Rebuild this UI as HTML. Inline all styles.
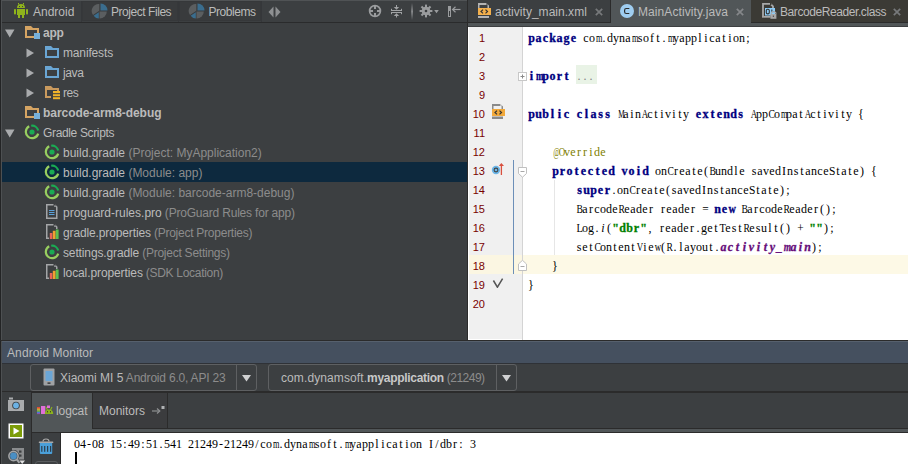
<!DOCTYPE html>
<html><head><meta charset="utf-8"><style>
html,body{margin:0;padding:0;background:#3c3f41;}
#r{position:relative;width:908px;height:464px;overflow:hidden;background:#3c3f41;font-family:"Liberation Sans",sans-serif;font-size:12px;color:#bbbbbb;}
#r div, #r svg{position:absolute;}
.t{white-space:pre;}
.g{color:#8c8c8c;}
.cd{font-family:"Liberation Serif",serif;font-size:12px;line-height:19px;white-space:pre;color:#000;}
.cd i{display:inline-block;width:6px;height:19px;font-style:normal;text-align:center;vertical-align:top;}
.cd .k i,.cd .s i,.cd .f i{width:7px;font-weight:bold;-webkit-text-stroke:0.3px;}
.k{color:#000080}.s{color:#008000}.f{color:#660e7a}.f i,.it i{font-style:italic}.an{color:#808000}.gr{color:#808080}
.ln{font-family:"Liberation Sans",sans-serif;font-size:11px;color:#780000;text-align:right;width:30px;line-height:19px;}
</style></head><body><div id="r">
<div style="left:0px;top:0px;width:1px;height:464px;background:#232425;"></div>
<div style="left:1px;top:0px;width:1px;height:464px;background:#4d5052;"></div>
<div style="left:2px;top:0px;width:465px;height:1px;background:#505355;"></div>
<div style="left:2px;top:1px;width:465px;height:21px;background:#3c3f41;"></div>
<div style="left:81px;top:1px;width:1px;height:21px;background:#35373a;"></div>
<div style="left:82px;top:1px;width:96px;height:20px;background:#393b3d;border:1px solid #36383a;box-sizing:border-box;"></div>
<div style="left:178px;top:1px;width:1px;height:21px;background:#35373a;"></div>
<div style="left:179px;top:1px;width:82px;height:20px;background:#393b3d;border:1px solid #36383a;box-sizing:border-box;"></div>
<div style="left:261px;top:1px;width:1px;height:21px;background:#35373a;"></div>
<div style="left:2px;top:22px;width:465px;height:1px;background:#2a2b2c;"></div>
<div style="left:467px;top:0px;width:1px;height:340px;background:#2b2b2b;"></div>
<svg style="left:13px;top:2px" width="17" height="18" viewBox="0 0 17 18">
<g fill="#8fb31c">
<path d="M4 6 Q4 2 8 2 Q12 2 12 6 Z"/>
<rect x="5" y="1" width="1" height="1.5"/><rect x="10" y="1" width="1" height="1.5"/>
<rect x="4" y="7" width="8" height="6"/>
<rect x="1" y="7" width="2" height="5.5" rx="0.8"/><rect x="13" y="7" width="2" height="5.5" rx="0.8"/>
<rect x="5" y="12.5" width="2" height="3.5"/><rect x="9" y="12.5" width="2" height="3.5"/>
</g>
<rect x="6" y="4" width="1" height="1" fill="#3c3f41"/><rect x="9" y="4" width="1" height="1" fill="#3c3f41"/>
</svg>
<div class="t" style="left:33px;top:2px;line-height:20px;">Android</div>
<svg style="left:91px;top:2px" width="18" height="18" viewBox="0 0 18 18">
<path d="M9.5 8.5 L9.5 1.5 A7 7 0 0 1 16.5 8.5 Z" fill="#3a6d8e"/>
<path d="M8.5 9.5 L15.8 9.5 A7 7 0 0 1 8.5 16.5 Z" fill="#5b5e60"/>
<path d="M7.8 10.3 L7.8 16.6 A7 7 0 0 1 2.6 13.8 Z" fill="#3a6d8e"/>
<path d="M8.3 8.7 L2.0 13.0 A7 7 0 0 1 8.3 2.0 Z" fill="#5b5e60"/>
</svg>
<div class="t" style="left:111px;top:2px;line-height:20px;letter-spacing:-0.45px">Project Files</div>
<svg style="left:188px;top:2px" width="18" height="18" viewBox="0 0 18 18">
<path d="M9.5 8.5 L9.5 1.5 A7 7 0 0 1 16.5 8.5 Z" fill="#3a6d8e"/>
<path d="M8.5 9.5 L15.8 9.5 A7 7 0 0 1 8.5 16.5 Z" fill="#5b5e60"/>
<path d="M7.8 10.3 L7.8 16.6 A7 7 0 0 1 2.6 13.8 Z" fill="#3a6d8e"/>
<path d="M8.3 8.7 L2.0 13.0 A7 7 0 0 1 8.3 2.0 Z" fill="#5b5e60"/>
</svg>
<div class="t" style="left:208.5px;top:2px;line-height:20px;letter-spacing:-0.45px">Problems</div>
<svg style="left:268px;top:6px" width="14" height="12" viewBox="0 0 14 12">
<path d="M5.5 0.5 L0.5 6 L5.5 11.5 Z" fill="#8e9092"/><path d="M7.5 0.5 L12.5 6 L7.5 11.5 Z" fill="#8e9092"/>
</svg>
<svg style="left:368px;top:4px" width="14" height="14" viewBox="0 0 14 14">
<circle cx="7" cy="7" r="5.4" fill="none" stroke="#9a9c9e" stroke-width="1.7"/>
<g fill="#9a9c9e"><rect x="6" y="1.5" width="2" height="3.5"/><rect x="6" y="9" width="2" height="3.5"/><rect x="1.5" y="6" width="3.5" height="2"/><rect x="9" y="6" width="3.5" height="2"/></g>
</svg>
<svg style="left:390px;top:4px" width="13" height="14" viewBox="0 0 13 14">
<g fill="#a0a2a4">
<rect x="1" y="6" width="11" height="1"/><rect x="1" y="4.8" width="1" height="2.2"/><rect x="11" y="4.8" width="1" height="2.2"/>
<rect x="1" y="8" width="11" height="1"/><rect x="1" y="8" width="1" height="2.2"/><rect x="11" y="8" width="1" height="2.2"/>
<rect x="6" y="1" width="1" height="2.5"/><path d="M3.8 3 H9.2 L6.5 5.8 Z"/>
<rect x="6" y="11" width="1" height="2.5"/><path d="M3.8 12 H9.2 L6.5 9.2 Z"/>
</g>
</svg>
<svg style="left:411px;top:3px" width="2" height="17" viewBox="0 0 2 17"><defs><linearGradient id="sg" x1="0" y1="0" x2="0" y2="1"><stop offset="0" stop-color="#3c3f41"/><stop offset="0.5" stop-color="#9a9c9e"/><stop offset="1" stop-color="#3c3f41"/></linearGradient></defs><rect x="0.3" y="0" width="1.5" height="17" fill="url(#sg)"/></svg>
<svg style="left:419px;top:4px" width="22" height="14" viewBox="0 0 22 14">
<g fill="#9a9c9e">
<circle cx="7" cy="7" r="4.3"/>
<rect x="6" y="0.6" width="2" height="12.8"/>
<rect x="0.6" y="6" width="12.8" height="2"/>
<rect x="6" y="0.6" width="2" height="12.8" transform="rotate(45 7 7)"/>
<rect x="6" y="0.6" width="2" height="12.8" transform="rotate(-45 7 7)"/>
<path d="M15.2 6 H19.8 L17.5 9.2 Z"/>
</g>
<circle cx="7" cy="7" r="1.3" fill="#3a3d3f"/>
</svg>
<svg style="left:447px;top:5px" width="14" height="13" viewBox="0 0 14 13">
<rect x="1" y="1" width="3" height="11" fill="#9a9c9e"/>
<rect x="2" y="6" width="1" height="5" fill="#3a3d3f"/>
<path d="M6 4.5 H13.5" stroke="#9a9c9e" stroke-width="1.2"/>
<path d="M8.5 1.8 L5.6 4.5 L8.5 7.2" fill="none" stroke="#9a9c9e" stroke-width="1.2"/>
</svg>
<div style="left:2px;top:23px;width:465px;height:317px;background:#3c3f41;"></div>
<div style="left:2px;top:162px;width:465px;height:20px;background:#0d293e;"></div>
<svg style="left:5px;top:29px" width="10" height="9" viewBox="0 0 10 9"><path d="M0 0.5 H9.5 L4.75 8.5 Z" fill="#a9abad"/></svg>
<svg style="left:25px;top:26px" width="16" height="14" viewBox="0 0 16 14">
<path d="M0 0 H6 L8 2 H14 V8 H12 V4 H2 V10 H9 V12 H0 Z" fill="#d5a463"/>
<rect x="9" y="7" width="6" height="6" fill="#76b0da"/>
</svg>
<div class="t" style="left:43px;top:23px;line-height:20px;font-weight:bold;letter-spacing:-0.2px">app</div>
<svg style="left:26px;top:48px" width="9" height="10" viewBox="0 0 9 10"><path d="M0.5 0.5 L8 5 L0.5 9.5 Z" fill="#a9abad"/></svg>
<svg style="left:45px;top:46px" width="15" height="13" viewBox="0 0 15 13">
<path d="M0 0 H6 L8 2 H14 V12 H0 Z M2 4 V10 H12 V4 Z" fill="#6aa6d4" fill-rule="evenodd"/>
</svg>
<div class="t" style="left:63px;top:43px;line-height:20px;letter-spacing:-0.15px">manifests</div>
<svg style="left:26px;top:68px" width="9" height="10" viewBox="0 0 9 10"><path d="M0.5 0.5 L8 5 L0.5 9.5 Z" fill="#a9abad"/></svg>
<svg style="left:45px;top:66px" width="15" height="13" viewBox="0 0 15 13">
<path d="M0 0 H6 L8 2 H14 V12 H0 Z M2 4 V10 H12 V4 Z" fill="#6aa6d4" fill-rule="evenodd"/>
</svg>
<div class="t" style="left:63px;top:63px;line-height:20px;letter-spacing:-0.4px">java</div>
<svg style="left:26px;top:88px" width="9" height="10" viewBox="0 0 9 10"><path d="M0.5 0.5 L8 5 L0.5 9.5 Z" fill="#a9abad"/></svg>
<svg style="left:45px;top:86px" width="16" height="14" viewBox="0 0 16 14">
<path d="M0 0 H6 L8 2 H14 V5 H12 V4 H2 V10 H6 V12 H0 Z" fill="#c99a5e"/>
<g fill="#f0b428"><rect x="8" y="5" width="7" height="2.2"/><rect x="8" y="8.2" width="7" height="2"/><rect x="8" y="11.2" width="7" height="2"/></g>
</svg>
<div class="t" style="left:63px;top:83px;line-height:20px;letter-spacing:-0.5px">res</div>
<svg style="left:25px;top:106px" width="16" height="14" viewBox="0 0 16 14">
<path d="M0 0 H6 L8 2 H14 V8 H12 V4 H2 V10 H9 V12 H0 Z" fill="#d5a463"/>
<rect x="9" y="7" width="6" height="6" fill="#76b0da"/>
</svg>
<div class="t" style="left:43px;top:103px;line-height:20px;font-weight:bold;letter-spacing:-0.05px">barcode-arm8-debug</div>
<svg style="left:5px;top:129px" width="10" height="9" viewBox="0 0 10 9"><path d="M0 0.5 H9.5 L4.75 8.5 Z" fill="#a9abad"/></svg>
<svg style="left:24px;top:124px" width="16" height="16" viewBox="0 0 16 16">
<path d="M5.2 2.3 A6.3 6.3 0 1 0 14.2 9.6" fill="none" stroke="#98cf60" stroke-width="2.2"/>
<path d="M7.2 1.75 A6.3 6.3 0 0 1 14.2 6.6" fill="none" stroke="#1aab53" stroke-width="2.2"/>
<circle cx="8" cy="8" r="2.6" fill="#1aab53"/>
</svg>
<div class="t" style="left:43px;top:123px;line-height:20px;letter-spacing:-0.35px">Gradle Scripts</div>
<svg style="left:44px;top:144px" width="16" height="16" viewBox="0 0 16 16">
<path d="M5.2 2.3 A6.3 6.3 0 1 0 14.2 9.6" fill="none" stroke="#98cf60" stroke-width="2.2"/>
<path d="M7.2 1.75 A6.3 6.3 0 0 1 14.2 6.6" fill="none" stroke="#1aab53" stroke-width="2.2"/>
<circle cx="8" cy="8" r="2.6" fill="#1aab53"/>
</svg>
<div class="t" style="left:63px;top:143px;line-height:20px;">build.gradle<span class="g"> (Project: MyApplication2)</span></div>
<svg style="left:44px;top:164px" width="16" height="16" viewBox="0 0 16 16">
<path d="M5.2 2.3 A6.3 6.3 0 1 0 14.2 9.6" fill="none" stroke="#98cf60" stroke-width="2.2"/>
<path d="M7.2 1.75 A6.3 6.3 0 0 1 14.2 6.6" fill="none" stroke="#1aab53" stroke-width="2.2"/>
<circle cx="8" cy="8" r="2.6" fill="#1aab53"/>
</svg>
<div class="t" style="left:63px;top:163px;line-height:20px;">build.gradle<span class="g"> (Module: app)</span></div>
<svg style="left:44px;top:184px" width="16" height="16" viewBox="0 0 16 16">
<path d="M5.2 2.3 A6.3 6.3 0 1 0 14.2 9.6" fill="none" stroke="#98cf60" stroke-width="2.2"/>
<path d="M7.2 1.75 A6.3 6.3 0 0 1 14.2 6.6" fill="none" stroke="#1aab53" stroke-width="2.2"/>
<circle cx="8" cy="8" r="2.6" fill="#1aab53"/>
</svg>
<div class="t" style="left:63px;top:183px;line-height:20px;">build.gradle<span class="g"> (Module: barcode-arm8-debug)</span></div>
<svg style="left:44px;top:203px" width="15" height="17" viewBox="0 0 15 17">
<path d="M2.75 1.75 H10.5 L12.75 4 V15.25 H2.75 Z" fill="none" stroke="#a3a5a7" stroke-width="1.5"/>
<rect x="9.5" y="1" width="2" height="2" fill="#3c3f41"/><rect x="10" y="2.5" width="1.2" height="1.2" fill="#a3a5a7"/>
<g fill="#5aa0d8"><rect x="5" y="7" width="5.5" height="1"/><rect x="5" y="9" width="5.5" height="1"/><rect x="5" y="11" width="5.5" height="1"/></g>
</svg>
<div class="t" style="left:63px;top:203px;line-height:20px;">proguard-rules.pro<span class="g" style="letter-spacing:-0.2px"> (ProGuard Rules for app)</span></div>
<svg style="left:44px;top:223px" width="15" height="17" viewBox="0 0 15 17">
<path d="M2.75 16 V1.75 H10.5 L12.75 4 V6" fill="none" stroke="#a3a5a7" stroke-width="1.5"/>
<path d="M2 15.25 H5" stroke="#a3a5a7" stroke-width="1.5"/>
<rect x="9.5" y="1" width="2" height="2" fill="#3c3f41"/><rect x="10" y="2.5" width="1.2" height="1.2" fill="#a3a5a7"/>
<rect x="5.8" y="10" width="2.6" height="6" fill="#e8645a"/>
<rect x="8.8" y="7.8" width="2.8" height="8.2" fill="#f0a030"/>
<rect x="11.8" y="6.5" width="2.8" height="9.5" fill="#5cc050"/>
</svg>
<div class="t" style="left:63px;top:223px;line-height:20px;"><span style="letter-spacing:-0.13px">gradle.properties</span><span class="g" style="letter-spacing:-0.25px"> (Project Properties)</span></div>
<svg style="left:44px;top:244px" width="16" height="16" viewBox="0 0 16 16">
<path d="M5.2 2.3 A6.3 6.3 0 1 0 14.2 9.6" fill="none" stroke="#98cf60" stroke-width="2.2"/>
<path d="M7.2 1.75 A6.3 6.3 0 0 1 14.2 6.6" fill="none" stroke="#1aab53" stroke-width="2.2"/>
<circle cx="8" cy="8" r="2.6" fill="#1aab53"/>
</svg>
<div class="t" style="left:63px;top:243px;line-height:20px;"><span style="letter-spacing:-0.13px">settings.gradle</span><span class="g" style="letter-spacing:-0.25px"> (Project Settings)</span></div>
<svg style="left:44px;top:263px" width="15" height="17" viewBox="0 0 15 17">
<path d="M2.75 16 V1.75 H10.5 L12.75 4 V6" fill="none" stroke="#a3a5a7" stroke-width="1.5"/>
<path d="M2 15.25 H5" stroke="#a3a5a7" stroke-width="1.5"/>
<rect x="9.5" y="1" width="2" height="2" fill="#3c3f41"/><rect x="10" y="2.5" width="1.2" height="1.2" fill="#a3a5a7"/>
<rect x="5.8" y="10" width="2.6" height="6" fill="#e8645a"/>
<rect x="8.8" y="7.8" width="2.8" height="8.2" fill="#f0a030"/>
<rect x="11.8" y="6.5" width="2.8" height="9.5" fill="#5cc050"/>
</svg>
<div class="t" style="left:63px;top:263px;line-height:20px;"><span style="letter-spacing:-0.1px">local.properties</span><span class="g" style="letter-spacing:-0.3px"> (SDK Location)</span></div>
<div style="left:468px;top:0px;width:440px;height:22px;background:#3c3f41;"></div>
<div style="left:468px;top:0px;width:142px;height:22px;background:#3c3f41;"></div>
<div style="left:610px;top:0px;width:1px;height:22px;background:#2b2b2b;"></div>
<div style="left:468px;top:22px;width:143px;height:1px;background:#2b2b2b;"></div>
<div style="left:611px;top:0px;width:140px;height:26px;background:#515658;"></div>
<div style="left:751px;top:0px;width:157px;height:22px;background:#3b3a35;"></div>
<div style="left:751px;top:22px;width:157px;height:1px;background:#2b2b2b;"></div>
<div style="left:750px;top:0px;width:1px;height:22px;background:#2b2b2b;"></div>
<div style="left:468px;top:23px;width:440px;height:3px;background:#515658;"></div>
<div style="left:611px;top:0px;width:140px;height:26px;background:#515658;"></div>
<div style="left:468px;top:26px;width:440px;height:1px;background:#3d3f41;"></div>
<svg style="left:477px;top:2px" width="16" height="18" viewBox="0 0 16 18">
<path d="M1 1 H9.5 L12 3.5 V6 H10.5 V3 H2.5 V6 H1 Z" fill="#b3b3b3"/>
<rect x="9.5" y="1" width="1" height="2" fill="#3c3f41"/>
<rect x="1" y="14" width="11" height="2" fill="#b3b3b3"/>
<rect x="1" y="6" width="13" height="7" fill="#f4b04c"/>
<path d="M6 7.6 L4 9.5 L6 11.4 M8.5 7.6 L10.5 9.5 L8.5 11.4" fill="none" stroke="#333" stroke-width="1.2"/>
</svg>
<div class="t" style="left:495px;top:2px;line-height:20px;letter-spacing:0.03px">activity_main.xml</div>
<svg style="left:595px;top:8px" width="8" height="8" viewBox="0 0 8 8"><path d="M0.8 0.8 L7.2 7.2 M7.2 0.8 L0.8 7.2" stroke="#77797b" stroke-width="1.7"/></svg>
<svg style="left:619px;top:3px" width="16" height="16" viewBox="0 0 16 16">
<circle cx="8" cy="8" r="7" fill="#9fcdf0"/>
<path d="M10.3 5.5 H7.3 Q5.6 5.5 5.6 7.3 V8.7 Q5.6 10.5 7.3 10.5 H10.3" fill="none" stroke="#2b2b2b" stroke-width="1.2"/>
</svg>
<div class="t" style="left:638px;top:2px;line-height:20px;letter-spacing:0.09px">MainActivity.java</div>
<svg style="left:736px;top:8px" width="8" height="8" viewBox="0 0 8 8"><path d="M0.8 0.8 L7.2 7.2 M7.2 0.8 L0.8 7.2" stroke="#85878a" stroke-width="1.7"/></svg>
<svg style="left:761px;top:2px" width="17" height="18" viewBox="0 0 17 18">
<path d="M2 14.8 V1.9 H9.5 L12 4.4 V6" fill="none" stroke="#a8a8a8" stroke-width="1.8"/>
<path d="M1.1 14.8 H9.5" stroke="#a8a8a8" stroke-width="1.8"/>
<rect x="9" y="1" width="1.5" height="2" fill="#3b3a35"/>
<rect x="4" y="6" width="10" height="7.5" fill="#8ccbf6"/>
<rect x="5.3" y="7.3" width="3" height="4.6" rx="1.3" fill="none" stroke="#333" stroke-width="1.1"/>
<rect x="10.3" y="7.5" width="1.1" height="2.2" fill="#333"/>
<path d="M10.3 12 V10.8 Q12.6 8.6 14.9 10.8 V12" fill="none" stroke="#a8a8a8" stroke-width="1.1"/>
<rect x="9.4" y="12" width="6" height="4.8" fill="#a8a8a8"/>
<rect x="11.8" y="13.5" width="1.2" height="1.5" fill="#555"/>
</svg>
<div class="t" style="left:780px;top:2px;line-height:20px;letter-spacing:-0.42px">BarcodeReader.class</div>
<svg style="left:893px;top:8px" width="8" height="8" viewBox="0 0 8 8"><path d="M0.8 0.8 L7.2 7.2 M7.2 0.8 L0.8 7.2" stroke="#77797b" stroke-width="1.7"/></svg>
<div style="left:468px;top:27px;width:440px;height:313px;background:#ffffff;"></div>
<div style="left:469px;top:27px;width:53px;height:312px;background:#f0f0f0;"></div>
<div style="left:522px;top:27px;width:1px;height:313px;background:#d4d4d4;"></div>
<div style="left:469px;top:255px;width:53px;height:19px;background:#fbf6e2;"></div>
<div style="left:523px;top:255px;width:385px;height:19px;background:#fdf9e6;"></div>
<div class="ln" style="left:455px;top:29px">1</div>
<div class="ln" style="left:455px;top:48px">2</div>
<div class="ln" style="left:455px;top:67px">3</div>
<div class="ln" style="left:455px;top:86px">9</div>
<div class="ln" style="left:455px;top:105px">10</div>
<div class="ln" style="left:455px;top:124px">11</div>
<div class="ln" style="left:455px;top:143px">12</div>
<div class="ln" style="left:455px;top:162px">13</div>
<div class="ln" style="left:455px;top:181px">14</div>
<div class="ln" style="left:455px;top:200px">15</div>
<div class="ln" style="left:455px;top:219px">16</div>
<div class="ln" style="left:455px;top:238px">17</div>
<div class="ln" style="left:455px;top:257px">18</div>
<div class="ln" style="left:455px;top:276px">19</div>
<div class="ln" style="left:455px;top:295px">20</div>
<div style="left:576px;top:65px;width:21px;height:19px;background:#e9f3e6;"></div>
<div class="cd" style="left:528px;top:29px"><span class="k"><i>p</i><i>a</i><i>c</i><i>k</i><i>a</i><i>g</i><i>e</i></span><i></i><i>c</i><i>o</i><i style="transform:scaleX(0.69)">m</i><i>.</i><i>d</i><i>y</i><i>n</i><i>a</i><i style="transform:scaleX(0.69)">m</i><i>s</i><i>o</i><i>f</i><i>t</i><i>.</i><i style="transform:scaleX(0.69)">m</i><i>y</i><i>a</i><i>p</i><i>p</i><i>l</i><i>i</i><i>c</i><i>a</i><i>t</i><i>i</i><i>o</i><i>n</i><i>;</i></div>
<div class="cd" style="left:528px;top:67px"><span class="k"><i>i</i><i style="transform:scaleX(0.74)">m</i><i>p</i><i>o</i><i>r</i><i>t</i></span><i></i><span class="gr"><i>.</i><i>.</i><i>.</i></span></div>
<div class="cd" style="left:528px;top:105px"><span class="k"><i>p</i><i>u</i><i>b</i><i>l</i><i>i</i><i>c</i></span><i></i><span class="k"><i>c</i><i>l</i><i>a</i><i>s</i><i>s</i></span><i></i><i style="transform:scaleX(0.60)">M</i><i>a</i><i>i</i><i>n</i><i style="transform:scaleX(0.74)">A</i><i>c</i><i>t</i><i>i</i><i>v</i><i>i</i><i>t</i><i>y</i><i></i><span class="k"><i>e</i><i>x</i><i>t</i><i>e</i><i>n</i><i>d</i><i>s</i></span><i></i><i style="transform:scaleX(0.74)">A</i><i>p</i><i>p</i><i style="transform:scaleX(0.80)">C</i><i>o</i><i style="transform:scaleX(0.69)">m</i><i>p</i><i>a</i><i>t</i><i style="transform:scaleX(0.74)">A</i><i>c</i><i>t</i><i>i</i><i>v</i><i>i</i><i>t</i><i>y</i><i></i><i>{</i></div>
<div class="cd" style="left:528px;top:143px"><i></i><i></i><i></i><i></i><span class="an"><i style="transform:scaleX(0.58)">@</i><i style="transform:scaleX(0.74)">O</i><i>v</i><i>e</i><i>r</i><i>r</i><i>i</i><i>d</i><i>e</i></span></div>
<div class="cd" style="left:528px;top:162px"><i></i><i></i><i></i><i></i><span class="k"><i>p</i><i>r</i><i>o</i><i>t</i><i>e</i><i>c</i><i>t</i><i>e</i><i>d</i></span><i></i><span class="k"><i>v</i><i>o</i><i>i</i><i>d</i></span><i></i><i>o</i><i>n</i><i style="transform:scaleX(0.80)">C</i><i>r</i><i>e</i><i>a</i><i>t</i><i>e</i><i>(</i><i style="transform:scaleX(0.80)">B</i><i>u</i><i>n</i><i>d</i><i>l</i><i>e</i><i></i><i>s</i><i>a</i><i>v</i><i>e</i><i>d</i><i>I</i><i>n</i><i>s</i><i>t</i><i>a</i><i>n</i><i>c</i><i>e</i><i style="transform:scaleX(0.96)">S</i><i>t</i><i>a</i><i>t</i><i>e</i><i>)</i><i></i><i>{</i></div>
<div class="cd" style="left:528px;top:181px"><i></i><i></i><i></i><i></i><i></i><i></i><i></i><i></i><span class="k"><i>s</i><i>u</i><i>p</i><i>e</i><i>r</i></span><i>.</i><i>o</i><i>n</i><i style="transform:scaleX(0.80)">C</i><i>r</i><i>e</i><i>a</i><i>t</i><i>e</i><i>(</i><i>s</i><i>a</i><i>v</i><i>e</i><i>d</i><i>I</i><i>n</i><i>s</i><i>t</i><i>a</i><i>n</i><i>c</i><i>e</i><i style="transform:scaleX(0.96)">S</i><i>t</i><i>a</i><i>t</i><i>e</i><i>)</i><i>;</i></div>
<div class="cd" style="left:528px;top:200px"><i></i><i></i><i></i><i></i><i></i><i></i><i></i><i></i><i style="transform:scaleX(0.80)">B</i><i>a</i><i>r</i><i>c</i><i>o</i><i>d</i><i>e</i><i style="transform:scaleX(0.80)">R</i><i>e</i><i>a</i><i>d</i><i>e</i><i>r</i><i></i><i>r</i><i>e</i><i>a</i><i>d</i><i>e</i><i>r</i><i></i><i style="transform:scaleX(0.95)">=</i><i></i><span class="k"><i>n</i><i>e</i><i style="transform:scaleX(0.85)">w</i></span><i></i><i style="transform:scaleX(0.80)">B</i><i>a</i><i>r</i><i>c</i><i>o</i><i>d</i><i>e</i><i style="transform:scaleX(0.80)">R</i><i>e</i><i>a</i><i>d</i><i>e</i><i>r</i><i>(</i><i>)</i><i>;</i></div>
<div class="cd" style="left:528px;top:219px"><i></i><i></i><i></i><i></i><i></i><i></i><i></i><i></i><i style="transform:scaleX(0.87)">L</i><i>o</i><i>g</i><i>.</i><span class="it"><i>i</i></span><i>(</i><span class="s"><i>"</i><i>d</i><i>b</i><i>r</i><i>"</i></span><i>,</i><i></i><i>r</i><i>e</i><i>a</i><i>d</i><i>e</i><i>r</i><i>.</i><i>g</i><i>e</i><i>t</i><i style="transform:scaleX(0.87)">T</i><i>e</i><i>s</i><i>t</i><i style="transform:scaleX(0.80)">R</i><i>e</i><i>s</i><i>u</i><i>l</i><i>t</i><i>(</i><i>)</i><i></i><i style="transform:scaleX(0.95)">+</i><i></i><span class="s"><i>"</i><i>"</i></span><i>)</i><i>;</i></div>
<div class="cd" style="left:528px;top:238px"><i></i><i></i><i></i><i></i><i></i><i></i><i></i><i></i><i>s</i><i>e</i><i>t</i><i style="transform:scaleX(0.80)">C</i><i>o</i><i>n</i><i>t</i><i>e</i><i>n</i><i>t</i><i style="transform:scaleX(0.74)">V</i><i>i</i><i>e</i><i style="transform:scaleX(0.74)">w</i><i>(</i><i style="transform:scaleX(0.80)">R</i><i>.</i><i>l</i><i>a</i><i>y</i><i>o</i><i>u</i><i>t</i><i>.</i><span class="f"><i>a</i><i>c</i><i>t</i><i>i</i><i>v</i><i>i</i><i>t</i><i>y</i><i>_</i><i style="transform:scaleX(0.79)">m</i><i>a</i><i>i</i><i>n</i></span><i>)</i><i>;</i></div>
<div class="cd" style="left:528px;top:257px"><i></i><i></i><i></i><i></i><i>}</i></div>
<div class="cd" style="left:528px;top:276px"><i>}</i></div>
<div style="left:554px;top:180px;width:1px;height:75px;background:#e6e6e6;"></div>
<div style="left:513px;top:160px;width:1px;height:114px;background:#6c8fb8;"></div>
<svg style="left:518px;top:72px" width="10" height="10" viewBox="0 0 10 10">
<rect x="0.5" y="0.5" width="8" height="8" fill="#fff" stroke="#c8c8c8"/>
<path d="M2.5 4.5 H6.5 M4.5 2.5 V6.5" stroke="#8a8a8a" stroke-width="1"/></svg>
<svg style="left:518px;top:167px" width="10" height="12" viewBox="0 0 10 12">
<path d="M0.5 0.5 H8.5 V6.5 L4.5 10.2 L0.5 6.5 Z" fill="#fff" stroke="#c0c0c0"/>
<path d="M2.5 4.5 H6.5" stroke="#a8a8a8" stroke-width="1"/></svg>
<svg style="left:518px;top:260px" width="10" height="12" viewBox="0 0 10 12">
<path d="M0.5 10.5 H8.5 V4 L4.5 0.3 L0.5 4 Z" fill="#fff" stroke="#c0c0c0"/>
<path d="M2.5 6.5 H6.5" stroke="#a8a8a8" stroke-width="1"/></svg>
<svg style="left:491px;top:103px" width="16" height="18" viewBox="0 0 16 18">
<path d="M1 1 H9.5 L12 3.5 V6 H10.5 V3 H2.5 V6 H1 Z" fill="#8a8a8a"/>
<rect x="9.5" y="1" width="1" height="2" fill="#f0f0f0"/>
<rect x="1" y="13.5" width="11" height="2.5" fill="#8a8a8a"/>
<rect x="1" y="6" width="13" height="7" fill="#f2a93b"/>
<path d="M6 7.6 L4 9.5 L6 11.4 M8.5 7.6 L10.5 9.5 L8.5 11.4" fill="none" stroke="#333" stroke-width="1.2"/>
</svg>
<svg style="left:490px;top:161px" width="15" height="16" viewBox="0 0 15 16">
<circle cx="6" cy="9" r="4.2" fill="#6cb6e8"/><circle cx="6" cy="9" r="1.9" fill="none" stroke="#444" stroke-width="1.1"/>
<path d="M11.4 14 V4" stroke="#d9503f" stroke-width="1.3"/><path d="M8.8 5 L11.4 2 L14 5 Z" fill="#d9503f"/>
</svg>
<svg style="left:492px;top:277px" width="12" height="11" viewBox="0 0 12 11">
<path d="M1.4 3.5 L5.4 10.2 L10.6 1.6" fill="none" stroke="#555" stroke-width="1.5"/></svg>
<div style="left:0px;top:340px;width:908px;height:1px;background:#2b2b2b;"></div>
<div style="left:2px;top:341px;width:906px;height:1px;background:#56606d;"></div>
<div style="left:2px;top:342px;width:906px;height:21px;background:#45505f;"></div>
<div class="t" style="left:7px;top:342px;line-height:22px;letter-spacing:0.1px">Android Monitor</div>
<div style="left:2px;top:363px;width:906px;height:1px;background:#2f3237;"></div>
<div style="left:2px;top:364px;width:906px;height:28px;background:#3c3f41;"></div>
<div style="left:30px;top:364px;width:227px;height:27px;background:transparent;border:1px solid #5e6062;border-radius:3px;box-sizing:border-box;"></div>
<div style="left:236px;top:365px;width:1px;height:25px;background:#5e6062;"></div>
<svg style="left:242px;top:375px" width="9" height="7" viewBox="0 0 9 7"><path d="M0 0 H9 L4.5 6.5 Z" fill="#cfd0d1"/></svg>
<svg style="left:43px;top:368px" width="12" height="18" viewBox="0 0 12 18">
<rect x="0.5" y="0.5" width="11" height="17" rx="1" fill="#a0a2a4"/>
<rect x="2.5" y="3" width="7" height="10" fill="#6ba6d6"/>
<rect x="4.5" y="14.5" width="3" height="1.2" fill="#222"/>
</svg>
<div class="t" style="left:60px;top:365px;line-height:27px;">Xiaomi MI 5<span class="g" style="letter-spacing:-0.2px"> Android 6.0, API 23</span></div>
<div style="left:268px;top:364px;width:249px;height:27px;background:transparent;border:1px solid #5e6062;border-radius:3px;box-sizing:border-box;"></div>
<div style="left:496px;top:365px;width:1px;height:25px;background:#5e6062;"></div>
<svg style="left:502px;top:375px" width="9" height="7" viewBox="0 0 9 7"><path d="M0 0 H9 L4.5 6.5 Z" fill="#cfd0d1"/></svg>
<div class="t" style="left:281px;top:365px;line-height:27px;"><span style="letter-spacing:0.1px">com.dynamsoft.</span><b style="letter-spacing:-0.3px;color:#c8c8c8">myapplication</b><span class="g" style="letter-spacing:-0.5px"> (21249)</span></div>
<div style="left:2px;top:391px;width:906px;height:1px;background:#2b2b2b;"></div>
<div style="left:2px;top:392px;width:29px;height:72px;background:#3c3f41;"></div>
<div style="left:31px;top:392px;width:1px;height:72px;background:#2b2b2b;"></div>
<div style="left:32px;top:392px;width:876px;height:37px;background:#3c3f41;"></div>
<div style="left:32px;top:392px;width:876px;height:1px;background:#2b2b2b;"></div>
<div style="left:32px;top:393px;width:60px;height:39px;background:#515658;"></div>
<div style="left:92px;top:393px;width:75px;height:35px;background:#3b3c3e;"></div>
<div style="left:92px;top:393px;width:1px;height:35px;background:#2b2b2b;"></div>
<div style="left:167px;top:393px;width:1px;height:36px;background:#2b2b2b;"></div>
<div style="left:92px;top:428px;width:816px;height:1px;background:#2b2b2b;"></div>
<div style="left:92px;top:429px;width:816px;height:3px;background:#515658;"></div>
<div style="left:32px;top:432px;width:876px;height:1px;background:#2b2b2b;"></div>
<svg style="left:36px;top:404px" width="18" height="11" viewBox="0 0 18 11">
<rect x="1" y="3" width="3" height="1.2" fill="#e0483c"/><rect x="1" y="4.2" width="3" height="1.2" fill="#f08c28"/><rect x="1" y="5.4" width="3" height="1.2" fill="#e8d030"/>
<rect x="1" y="6.6" width="3" height="1.2" fill="#6cc040"/><rect x="1" y="7.8" width="3" height="1.4" fill="#4a78d8"/><rect x="1" y="9.2" width="3" height="0.9" fill="#a050c0"/>
<rect x="5" y="2" width="4.3" height="8" fill="#e070d8"/><rect x="11" y="1.5" width="3" height="2.5" fill="#e070d8"/>
<path d="M8.8 10 Q8.8 5.5 13 5.5 Q17.2 5.5 17.2 10 Z" fill="#8cb31c"/>
<path d="M10 3 L11.5 6 M16 3 L14.5 6" stroke="#8cb31c" stroke-width="1.1"/>
<rect x="11" y="7.3" width="1" height="1" fill="#222"/><rect x="14" y="7.3" width="1" height="1" fill="#222"/>
</svg>
<div class="t" style="left:56px;top:393px;line-height:36px;letter-spacing:-0.1px">logcat</div>
<div class="t" style="left:99px;top:393px;line-height:36px;">Monitors</div>
<svg style="left:152px;top:405px" width="13" height="10" viewBox="0 0 13 10">
<path d="M0 6 H7" stroke="#8e9092" stroke-width="1.2"/><path d="M5 3.5 L7.8 6 L5 8.5" fill="none" stroke="#8e9092" stroke-width="1.2"/>
<rect x="9.5" y="1" width="3" height="3" fill="#b0b2b4"/></svg>
<svg style="left:7px;top:397px" width="18" height="15" viewBox="0 0 18 15">
<rect x="2" y="0.5" width="4" height="2" fill="#a9abad"/>
<rect x="1" y="3" width="16" height="11" fill="#a9abad"/>
<circle cx="9" cy="8.5" r="3.8" fill="#3c3f41"/><circle cx="9" cy="8.5" r="2.9" fill="#6cb2e4"/>
</svg>
<svg style="left:8px;top:423px" width="16" height="16" viewBox="0 0 16 16">
<rect x="0.5" y="0.5" width="15" height="15" fill="#ffffff"/><rect x="2" y="2" width="12" height="12" fill="#7c9c08"/>
<path d="M5.5 4.5 L11.5 8 L5.5 11.5 Z" fill="#fff"/></svg>
<svg style="left:6px;top:446px" width="20" height="18" viewBox="0 0 20 18">
<rect x="6" y="2" width="12" height="11.5" fill="#8a8c8e"/>
<g fill="#3c3f41"><rect x="8" y="4.5" width="2.5" height="2.2"/><rect x="13" y="4.5" width="2.5" height="2.2"/><rect x="8" y="8.5" width="2.5" height="2.2"/><rect x="13" y="8.5" width="2.5" height="2.2"/></g>
<circle cx="7.5" cy="10" r="6" fill="#3c3f41"/><circle cx="7.5" cy="10" r="4.6" fill="none" stroke="#a3a5a7" stroke-width="1.6"/><circle cx="7.5" cy="10" r="3.4" fill="#4a8fc4"/>
<path d="M10.8 13.5 L13.5 16.8" stroke="#a3a5a7" stroke-width="2"/>
<path d="M13.5 14.5 H19 L16.2 18 Z" fill="#e0e0e0"/>
</svg>
<div style="left:32px;top:433px;width:28px;height:31px;background:#3c3f41;"></div>
<div style="left:60px;top:433px;width:1px;height:31px;background:#2b2b2b;"></div>
<svg style="left:38px;top:438px" width="16" height="17" viewBox="0 0 16 17">
<path d="M5 3.5 Q5 1 8 1 Q11 1 11 3.5" fill="none" stroke="#a8a8a8" stroke-width="1.2"/>
<rect x="0.8" y="3.5" width="14.5" height="1.6" rx="0.6" fill="#a8a8a8"/>
<path d="M1.8 5.1 H14.2 V15 Q14.2 16 13.2 16 H2.8 Q1.8 16 1.8 15 Z" fill="#4a9fd8"/>
<g fill="#2d3e4c"><rect x="3.2" y="8" width="1.2" height="5.8"/><rect x="6.1" y="8" width="1.2" height="5.8"/><rect x="9" y="8" width="1.2" height="5.8"/><rect x="12" y="8" width="1.2" height="5.8"/></g>
</svg>
<div style="left:35px;top:461px;width:23px;height:8px;background:#3c3f41;border:1px solid #5a5d5f;border-radius:3px;box-sizing:border-box;"></div>
<div style="left:61px;top:433px;width:847px;height:31px;background:#ffffff;"></div>
<div class="cd" style="left:74px;top:435px"><i>0</i><i>4</i><i>-</i><i>0</i><i>8</i><i></i><i>1</i><i>5</i><i>:</i><i>4</i><i>9</i><i>:</i><i>5</i><i>1</i><i>.</i><i>5</i><i>4</i><i>1</i><i></i><i>2</i><i>1</i><i>2</i><i>4</i><i>9</i><i>-</i><i>2</i><i>1</i><i>2</i><i>4</i><i>9</i><i>/</i><i>c</i><i>o</i><i style="transform:scaleX(0.69)">m</i><i>.</i><i>d</i><i>y</i><i>n</i><i>a</i><i style="transform:scaleX(0.69)">m</i><i>s</i><i>o</i><i>f</i><i>t</i><i>.</i><i style="transform:scaleX(0.69)">m</i><i>y</i><i>a</i><i>p</i><i>p</i><i>l</i><i>i</i><i>c</i><i>a</i><i>t</i><i>i</i><i>o</i><i>n</i><i></i><i>I</i><i>/</i><i>d</i><i>b</i><i>r</i><i>:</i><i></i><i>3</i></div>
<div style="left:75px;top:452px;width:2px;height:12px;background:#000000;"></div>
</div></body></html>
